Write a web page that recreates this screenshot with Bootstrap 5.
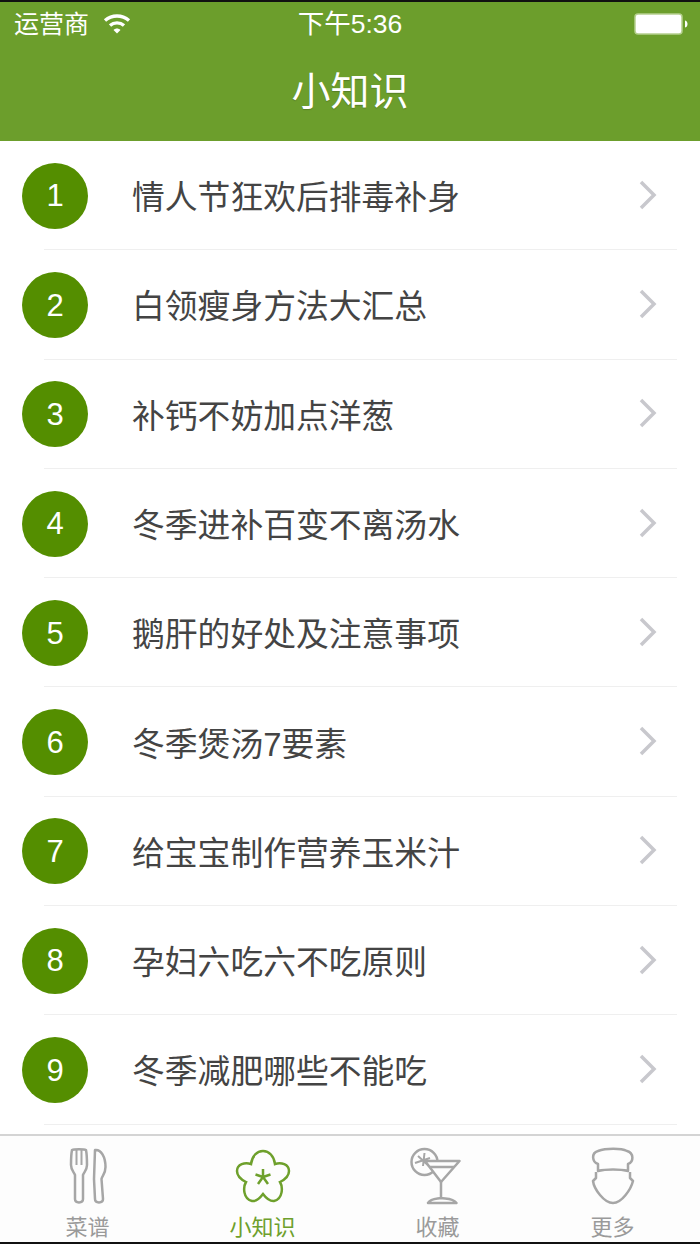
<!DOCTYPE html>
<html lang="zh">
<head>
  <meta charset="UTF-8">
  <meta name="viewport" content="width=device-width, initial-scale=1.0">
  <title>小知识</title>
  <link href="https://cdn.jsdelivr.net/npm/bootstrap@5.3.0/dist/css/bootstrap.min.css" rel="stylesheet">
  <style>
    html, body { height: 1244px; overflow: hidden; }
    body { font-family: "Liberation Sans", "Noto Sans CJK SC", sans-serif; background: #fff; }
    .phone { height: 1244px; border-top: 2px solid #111; border-bottom: 2px solid #111; }
    .app-head { background: #6c9e2c; color: #fff; height: 139px; flex: none; }
    .status-row { height: 44px; padding: 0 12px 0 14px; font-size: 25px; line-height: 44px; }
    .status-left { gap: 13px; }
    .status-time { left: 0; right: 0; top: 0; text-align: center; font-size: 26.5px; }
    .head-title { font-size: 39px; line-height: 52px; margin-top: 20px; text-shadow: 0 1px 1px rgba(0,0,0,.2); }
    .topic-list { flex: 1 1 auto; min-height: 0; overflow: hidden; }
    .topic-row { height: 109.3px; border: 0; padding: 0 0 0 22px; position: relative; color: #444; font-size: 32.8px; }
    .topic-row::after { content: ""; position: absolute; left: 44px; right: 23px; bottom: 0; height: 1px; background: #efefef; }
    .topic-num { width: 66px; height: 66px; padding-top: 2px; background: #548e00; color: #fff; font-size: 31px; flex: none; margin-right: 44px; }
    .topic-name { flex: 1 1 auto; margin-top: 4px; }
    .topic-go { margin-right: 43px; margin-bottom: 2px; flex: none; }
    .tab-bar { height: 108px; flex: none; border-top: 2px solid #d4d4d4; background: #fdfdfd; }
    .tab-item { width: 175px; color: #9a9a9a; font-size: 22px; line-height: 26px; padding-top: 11px; }
    .tab-item svg { display: block; height: 60px; width: 70px; }
    .tab-on { color: #6ea02c; }
    .tab-label { margin-top: 8px; }
  </style>
</head>
<body>

<div class="phone d-flex flex-column">
  <div class="app-head">
    <div class="status-row d-flex align-items-center justify-content-between position-relative">
      <div class="status-left d-flex align-items-center">
        <span>运营商</span>
        <svg width="30" height="22" viewBox="0 0 30 22" fill="none" stroke="#fff" stroke-width="3.4"><path d="M3 7.500C10 1.500 20 1.500 27 7.500"/><path d="M8 12.500C12 9 18 9 22 12.500"/><path d="M11.500 17L15 20.500 18.500 17C16.500 15 13.500 15 11.500 17Z" fill="#fff" stroke="none"/></svg>
      </div>
      <div class="status-time position-absolute">下午5:36</div>
      <svg width="54" height="22" viewBox="0 0 54 22"><rect x="1" y="1" width="47" height="20" rx="3" fill="#fff" stroke="#b5d08e" stroke-width="1.500"/><path d="M51 7.500C53 8 53.500 9.500 53.500 11S53 14 51 14.500Z" fill="#fff"/></svg>
    </div>
    <div class="head-title text-center">小知识</div>
  </div>

  <div class="topic-list list-group list-group-flush rounded-0">
    <div class="topic-row list-group-item d-flex align-items-center"><span class="topic-num rounded-circle d-flex align-items-center justify-content-center">1</span><span class="topic-name">情人节狂欢后排毒补身</span><svg class="topic-go" width="18" height="30" viewBox="0 0 18 30" fill="none" stroke="#c8c8cd" stroke-width="3.500"><path d="M2 2L15 15 2 28"/></svg></div>
    <div class="topic-row list-group-item d-flex align-items-center"><span class="topic-num rounded-circle d-flex align-items-center justify-content-center">2</span><span class="topic-name">白领瘦身方法大汇总</span><svg class="topic-go" width="18" height="30" viewBox="0 0 18 30" fill="none" stroke="#c8c8cd" stroke-width="3.500"><path d="M2 2L15 15 2 28"/></svg></div>
    <div class="topic-row list-group-item d-flex align-items-center"><span class="topic-num rounded-circle d-flex align-items-center justify-content-center">3</span><span class="topic-name">补钙不妨加点洋葱</span><svg class="topic-go" width="18" height="30" viewBox="0 0 18 30" fill="none" stroke="#c8c8cd" stroke-width="3.500"><path d="M2 2L15 15 2 28"/></svg></div>
    <div class="topic-row list-group-item d-flex align-items-center"><span class="topic-num rounded-circle d-flex align-items-center justify-content-center">4</span><span class="topic-name">冬季进补百变不离汤水</span><svg class="topic-go" width="18" height="30" viewBox="0 0 18 30" fill="none" stroke="#c8c8cd" stroke-width="3.500"><path d="M2 2L15 15 2 28"/></svg></div>
    <div class="topic-row list-group-item d-flex align-items-center"><span class="topic-num rounded-circle d-flex align-items-center justify-content-center">5</span><span class="topic-name">鹅肝的好处及注意事项</span><svg class="topic-go" width="18" height="30" viewBox="0 0 18 30" fill="none" stroke="#c8c8cd" stroke-width="3.500"><path d="M2 2L15 15 2 28"/></svg></div>
    <div class="topic-row list-group-item d-flex align-items-center"><span class="topic-num rounded-circle d-flex align-items-center justify-content-center">6</span><span class="topic-name">冬季煲汤7要素</span><svg class="topic-go" width="18" height="30" viewBox="0 0 18 30" fill="none" stroke="#c8c8cd" stroke-width="3.500"><path d="M2 2L15 15 2 28"/></svg></div>
    <div class="topic-row list-group-item d-flex align-items-center"><span class="topic-num rounded-circle d-flex align-items-center justify-content-center">7</span><span class="topic-name">给宝宝制作营养玉米汁</span><svg class="topic-go" width="18" height="30" viewBox="0 0 18 30" fill="none" stroke="#c8c8cd" stroke-width="3.500"><path d="M2 2L15 15 2 28"/></svg></div>
    <div class="topic-row list-group-item d-flex align-items-center"><span class="topic-num rounded-circle d-flex align-items-center justify-content-center">8</span><span class="topic-name">孕妇六吃六不吃原则</span><svg class="topic-go" width="18" height="30" viewBox="0 0 18 30" fill="none" stroke="#c8c8cd" stroke-width="3.500"><path d="M2 2L15 15 2 28"/></svg></div>
    <div class="topic-row list-group-item d-flex align-items-center"><span class="topic-num rounded-circle d-flex align-items-center justify-content-center">9</span><span class="topic-name">冬季减肥哪些不能吃</span><svg class="topic-go" width="18" height="30" viewBox="0 0 18 30" fill="none" stroke="#c8c8cd" stroke-width="3.500"><path d="M2 2L15 15 2 28"/></svg></div>
  </div>

  <div class="tab-bar d-flex">
    <div class="tab-item d-flex flex-column align-items-center">
      <svg viewBox="0 0 70 60" fill="none" stroke="#a6a6a6" stroke-width="2.500" stroke-linejoin="round">
        <path d="M19 3C18 8 18 14 18 18C18 23 21 25 22 28L22 52C22 56.500 30 56.500 30 52L30 28C31 25 34 23 34 18C34 14 34 8 33 3C31 2 21 2 19 3Z"/>
        <path d="M23.500 3V18M28.500 3V18" stroke-width="2"/>
        <path d="M42 3C48 2 52.500 10 52.500 20C52.500 27 49 29 48.500 32L50 52C50 56.500 42 56.500 42 52L41 32Z"/>
      </svg>
      <div class="tab-label">菜谱</div>
    </div>
    <div class="tab-item tab-on d-flex flex-column align-items-center">
      <svg viewBox="0 0 70 60" fill="none" stroke="#6ea02c" stroke-width="2.500">
        <path d="M35 4C29 4 24 9 23 17C17 15 9 17 9 24C9 30 14 33 18 35C15 40 15 52 24 54C29 54.500 32 51 35 47C38 51 41 54.500 46 54C55 52 55 40 52 35C56 33 61 30 61 24C61 17 53 15 47 17C46 9 41 4 35 4Z"/>
        <path d="M35 22V30M27.500 27.500L35 30M42.500 27.500L35 30M30 37L35 30M40 37L35 30"/>
      </svg>
      <div class="tab-label">小知识</div>
    </div>
    <div class="tab-item d-flex flex-column align-items-center">
      <svg viewBox="0 0 70 60" fill="none" stroke="#a6a6a6" stroke-width="2.500" stroke-linejoin="round">
        <circle cx="21.500" cy="15" r="13"/>
        <path d="M15 9L27 20M21.500 6L20 19M12 16L27 11" stroke-width="2"/>
        <path d="M22 14H56.500L38 35Z" fill="#fdfdfd"/>
        <path d="M27 20H51"/>
        <path d="M38 35V51M25 56C28 51 34 52 38 51C43 52 50 51 53.500 56Z"/>
      </svg>
      <div class="tab-label">收藏</div>
    </div>
    <div class="tab-item d-flex flex-column align-items-center">
      <svg viewBox="0 0 70 60" fill="none" stroke="#a6a6a6" stroke-width="2.500" stroke-linejoin="round">
        <path d="M20 24V17C14 15 13 6 20 4C28 1 43 1 49 4C56 6 56 15 50 17V24C42 22 28 22 20 24Z"/>
        <path d="M18 25V31L15 34C16 42 26 56 35 56C44 56 53 42 55 34L52 31V25"/>
      </svg>
      <div class="tab-label">更多</div>
    </div>
  </div>
</div>

</body>
</html>
